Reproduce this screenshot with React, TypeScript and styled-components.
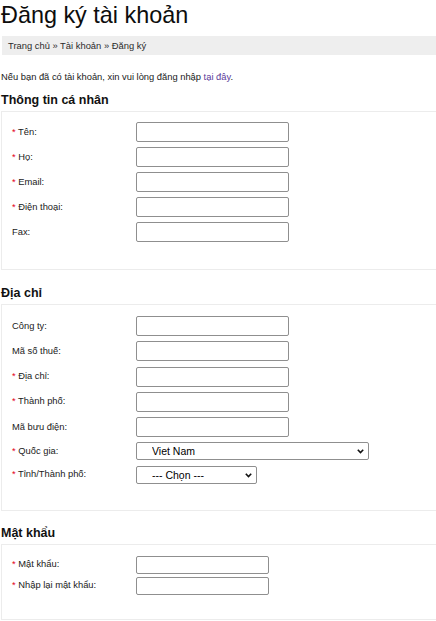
import styled, { createGlobalStyle } from "styled-components";

const GlobalStyle = createGlobalStyle`
  html, body {
    margin: 0;
    padding: 0;
    overflow: hidden;
    background: #fff;
  }
  body {
    font-family: "Liberation Sans", Arial, sans-serif;
    color: #1a1a1a;
  }
`;

const Page = styled.div`
  box-sizing: border-box;
  width: 100%;
  padding: 2px 0 0 1px;
  font-size: 9.36px;
`;

const Title = styled.h1`
  margin: 0 0 7px;
  font-size: 23.4px;
  line-height: 27px;
  font-weight: normal;
  color: #0d0d0d;
`;

const Breadcrumb = styled.div`
  display: flex;
  align-items: center;
  height: 19px;
  margin-left: 1px;
  padding: 0 6px;
  background: #eeeeee;
  color: #2b2b2b;
  font-size: 9.4px;
`;

const Intro = styled.p`
  margin: 17px 0 0;
  line-height: 11px;
  color: #1a1a1a;

  a {
    color: #5b3c9a;
    text-decoration: none;
  }
`;

const Heading = styled.h2<{ $top: number }>`
  margin: ${(p) => p.$top}px 0 3px;
  font-size: 12.5px;
  line-height: 15px;
  font-weight: bold;
  color: #111;
`;

const Box = styled.div<{ $gap: number; $pt: number; $pb: number }>`
  display: flex;
  flex-direction: column;
  gap: ${(p) => p.$gap}px;
  padding: ${(p) => p.$pt}px 0 ${(p) => p.$pb}px 10px;
  border: 1px solid #ececec;
  border-right: none;
`;

const Row = styled.div`
  display: flex;
  align-items: center;
`;

const Label = styled.label`
  width: 124px;
  flex-shrink: 0;
  color: #1a1a1a;
  line-height: 11px;
`;

const Req = styled.span`
  color: #e3001b;
`;

const TextInput = styled.input<{ $w: number; $h: number }>`
  box-sizing: border-box;
  width: ${(p) => p.$w}px;
  height: ${(p) => p.$h}px;
  margin: 0;
  padding: 0 3px;
  border: 1px solid #8f8f8f;
  border-radius: 2px;
  background: #fff;
  font: inherit;
  outline: none;
`;

const SelectWrap = styled.div<{ $w: number }>`
  position: relative;
  width: ${(p) => p.$w}px;
  height: 18px;
`;

const Select = styled.select`
  box-sizing: border-box;
  appearance: none;
  width: 100%;
  height: 100%;
  margin: 0;
  padding: 0 18px 0 15px;
  border: 1px solid #8f8f8f;
  border-radius: 2px;
  background: #fff;
  color: #000;
  font-family: "Liberation Sans", Arial, sans-serif;
  font-size: 10.5px;
  outline: none;
`;

const Chevron = styled.svg`
  position: absolute;
  right: 5px;
  top: 7px;
  width: 7px;
  height: 5px;
  pointer-events: none;
`;

type Field = {
  label: string;
  required?: boolean;
};

function FieldRow({ label, required, w, h }: Field & { w: number; h: number }) {
  return (
    <Row>
      <Label>
        {required && <Req>*</Req>}
        {required ? " " : ""}
        {label}
      </Label>
      <TextInput type="text" $w={w} $h={h} />
    </Row>
  );
}

function SelectRow({
  label,
  w,
  value,
}: {
  label: string;
  w: number;
  value: string;
}) {
  return (
    <Row>
      <Label>
        <Req>*</Req> {label}
      </Label>
      <SelectWrap $w={w}>
        <Select defaultValue={value}>
          <option value={value}>{value}</option>
        </Select>
        <Chevron viewBox="0 0 7 5">
          <path
            d="M0.8 0.8 L3.5 3.6 L6.2 0.8"
            fill="none"
            stroke="#111"
            strokeWidth="1.6"
          />
        </Chevron>
      </SelectWrap>
    </Row>
  );
}

const personal: Field[] = [
  { label: "Tên:", required: true },
  { label: "Họ:", required: true },
  { label: "Email:", required: true },
  { label: "Điện thoại:", required: true },
  { label: "Fax:" },
];

const address: Field[] = [
  { label: "Công ty:" },
  { label: "Mã số thuế:" },
  { label: "Địa chỉ:", required: true },
  { label: "Thành phố:", required: true },
  { label: "Mã bưu điện:" },
];

const password: Field[] = [
  { label: "Mật khẩu:", required: true },
  { label: "Nhập lại mật khẩu:", required: true },
];

export default function App() {
  return (
    <Page>
      <GlobalStyle />
      <Title>Đăng ký tài khoản</Title>
      <Breadcrumb>Trang chủ » Tài khoản » Đăng ký</Breadcrumb>
      <Intro>
        Nếu bạn đã có tài khoản, xin vui lòng đăng nhập <a href="#">tại đây</a>.
      </Intro>

      <Heading $top={10}>Thông tin cá nhân</Heading>
      <Box $gap={5} $pt={10} $pb={27}>
        {personal.map((f) => (
          <FieldRow key={f.label} {...f} w={153} h={20} />
        ))}
      </Box>

      <Heading $top={16}>Địa chỉ</Heading>
      <Box $gap={5.25} $pt={11} $pb={26}>
        {address.map((f) => (
          <FieldRow key={f.label} {...f} w={153} h={20} />
        ))}
        <SelectRow label="Quốc gia:" w={233} value="Viet Nam" />
        <SelectRow label="Tỉnh/Thành phố:" w={121} value="--- Chọn ---" />
      </Box>

      <Heading $top={15}>Mật khẩu</Heading>
      <Box $gap={3} $pt={11} $pb={24}>
        {password.map((f) => (
          <FieldRow key={f.label} {...f} w={133} h={18} />
        ))}
      </Box>
    </Page>
  );
}
